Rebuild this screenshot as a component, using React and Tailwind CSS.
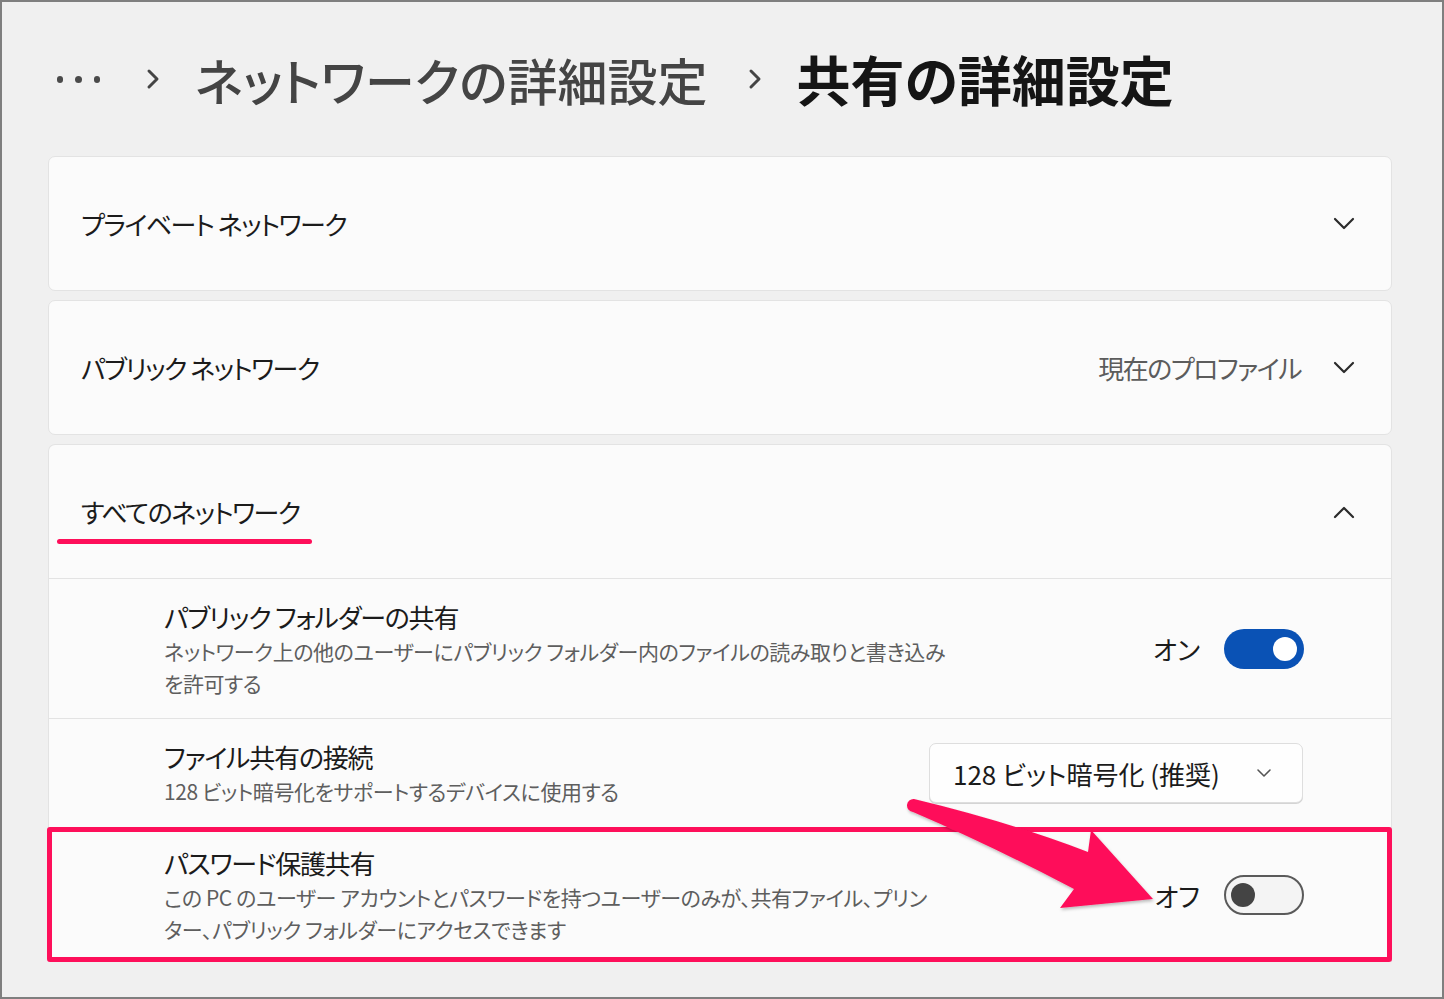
import React from "react";

const Chevron = ({ up = false }) => (
  <svg width="22" height="14" viewBox="0 0 22 14" className="shrink-0">
    <polyline
      points={up ? "2,12 11,3 20,12" : "2,2 11,11 20,2"}
      fill="none"
      stroke="#2b2b2b"
      strokeWidth="2.2"
      strokeLinecap="round"
      strokeLinejoin="round"
    />
  </svg>
);

const Crumb = () => (
  <svg width="14" height="22" viewBox="0 0 14 22" className="shrink-0">
    <polyline points="3,3 11,11 3,19" fill="none" stroke="#444" strokeWidth="3" strokeLinecap="round" strokeLinejoin="round" />
  </svg>
);

const ToggleOn = () => (
  <div className="w-[80px] h-[40px] rounded-full bg-[#0a52b5] flex items-center justify-end pr-[7px]">
    <div className="w-[24px] h-[24px] rounded-full bg-white" />
  </div>
);

const ToggleOff = () => (
  <div className="w-[80px] h-[40px] rounded-full bg-[#f4f4f4] border-2 border-[#5a5a5a] flex items-center pl-[5px]">
    <div className="w-[24px] h-[24px] rounded-full bg-[#444]" />
  </div>
);

export default function App() {
  return (
    <div className="relative w-[1444px] h-[999px] border-2 border-[#7f7f7f] bg-[#f0f0f0] overflow-hidden font-['Noto_Sans_CJK_JP',sans-serif] [font-feature-settings:'palt']">
      {/* Breadcrumb */}
      <div className="h-[154px] flex items-center pl-[55px]">
        <div className="flex items-center gap-[12px] w-[43px]">
          <span className="w-[7px] h-[7px] rounded-full bg-[#4a4a4a]" />
          <span className="w-[7px] h-[7px] rounded-full bg-[#4a4a4a]" />
          <span className="w-[7px] h-[7px] rounded-full bg-[#4a4a4a]" />
        </div>
        <div className="ml-[46px]"><Crumb /></div>
        <span className="ml-[35px] text-[50px] leading-none font-medium text-[#444] whitespace-nowrap">ネットワークの詳細設定</span>
        <div className="ml-[40px]"><Crumb /></div>
        <span className="ml-[35px] text-[54px] leading-none font-bold text-[#151515] whitespace-nowrap">共有の詳細設定</span>
      </div>

      <div className="ml-[46px] w-[1344px] flex flex-col gap-[9px]">
        {/* Card 1 */}
        <div className="h-[135px] rounded-[7px] bg-[#fbfbfb] border border-[#e3e3e3] flex items-center pl-[32px] pr-[36px]">
          <span className="text-[26px] tracking-[-1.5px] text-[#1b1b1b] whitespace-nowrap">プライベート ネットワーク</span>
          <div className="ml-auto"><Chevron /></div>
        </div>
        {/* Card 2 */}
        <div className="h-[135px] rounded-[7px] bg-[#fbfbfb] border border-[#e3e3e3] flex items-center pl-[32px] pr-[36px]">
          <span className="text-[26px] tracking-[-1.5px] text-[#1b1b1b] whitespace-nowrap">パブリック ネットワーク</span>
          <span className="ml-auto text-[26px] tracking-[-1.5px] text-[#5c5c5c] whitespace-nowrap">現在のプロファイル</span>
          <div className="ml-[32px]"><Chevron /></div>
        </div>
        {/* Card 3 */}
        <div className="rounded-t-[7px] bg-[#fbfbfb] border border-b-0 border-[#e3e3e3] flex flex-col">
          <div className="h-[134px] flex items-center pl-[32px] pr-[36px] border-b border-[#e3e3e3]">
            <div className="relative">
              <span className="text-[26px] tracking-[-1.5px] text-[#1b1b1b] whitespace-nowrap">すべてのネットワーク</span>
              <div className="absolute left-[-24px] top-[47px] w-[255px] h-[5px] rounded-full bg-[#fe0f5a]" />
            </div>
            <div className="ml-auto"><Chevron up /></div>
          </div>

          {/* Row 1 */}
          <div className="h-[140px] flex items-center pl-[115px] pr-[87px] border-b border-[#e3e3e3]">
            <div className="flex flex-col">
              <span className="text-[26px] tracking-[-1.2px] leading-[36px] text-[#1b1b1b] whitespace-nowrap">パブリック フォルダーの共有</span>
              <span className="text-[21px] tracking-[-0.4px] leading-[32px] text-[#5e5e5e] whitespace-nowrap">ネットワーク上の他のユーザーにパブリック フォルダー内のファイルの読み取りと書き込み<br />を許可する</span>
            </div>
            <div className="ml-auto flex items-center gap-[24px]">
              <span className="text-[26px] text-[#1b1b1b]">オン</span>
              <ToggleOn />
            </div>
          </div>

          {/* Row 2 */}
          <div className="h-[109px] flex items-center pl-[115px] pr-[88px] border-b border-[#e3e3e3]">
            <div className="flex flex-col">
              <span className="text-[26px] tracking-[-1.2px] leading-[36px] text-[#1b1b1b] whitespace-nowrap">ファイル共有の接続</span>
              <span className="text-[21px] tracking-[-0.4px] leading-[32px] text-[#5e5e5e] whitespace-nowrap">128 ビット暗号化をサポートするデバイスに使用する</span>
            </div>
            <div className="ml-auto w-[374px] h-[60px] rounded-[7px] bg-[#fefefe] border border-[#dedede] shadow-[0_1px_0_#d4d4d4] flex items-center pl-[23px] pr-[30px]">
              <span className="text-[26px] text-[#1b1b1b] whitespace-nowrap">128 ビット暗号化 (推奨)</span>
              <svg width="16" height="10" viewBox="0 0 16 10" className="ml-auto">
                <polyline points="2,2 8,8 14,2" fill="none" stroke="#555" strokeWidth="1.6" strokeLinecap="round" strokeLinejoin="round" />
              </svg>
            </div>
          </div>

          {/* Row 3 */}
          <div className="relative h-[134px] flex items-center pl-[115px] pr-[87px]">
            <div className="flex flex-col">
              <span className="text-[26px] tracking-[-1.2px] leading-[36px] text-[#1b1b1b] whitespace-nowrap">パスワード保護共有</span>
              <span className="text-[21px] tracking-[-0.4px] leading-[32px] text-[#5e5e5e] whitespace-nowrap">この PC のユーザー アカウントとパスワードを持つユーザーのみが、共有ファイル、プリン<br />ター、パブリック フォルダーにアクセスできます</span>
            </div>
            <div className="ml-auto flex items-center gap-[24px]">
              <span className="text-[26px] text-[#1b1b1b]">オフ</span>
              <ToggleOff />
            </div>
            <div className="absolute left-[-2px] right-[-1px] top-[-1px] bottom-[0px] border-[5px] border-[#fe0f5a] rounded-[3px] pointer-events-none" />
          </div>
        </div>
      </div>

      {/* Arrow annotation */}
      <svg className="absolute left-0 top-0 pointer-events-none" width="1440" height="995" viewBox="2 2 1440 995">
        <defs>
          <filter id="sh" x="-10%" y="-10%" width="130%" height="130%">
            <feDropShadow dx="1" dy="2" stdDeviation="1.5" floodColor="#000" floodOpacity="0.25" />
          </filter>
        </defs>
        <path
          d="M 914 799 Q 1010 822 1088 852 L 1091 830 L 1153 899 L 1060 908 L 1074 889 Q 990 845 913 812 A 6.5 6.5 0 0 1 914 799 Z"
          fill="#fe0f5a"
          filter="url(#sh)"
        />
      </svg>
    </div>
  );
}
